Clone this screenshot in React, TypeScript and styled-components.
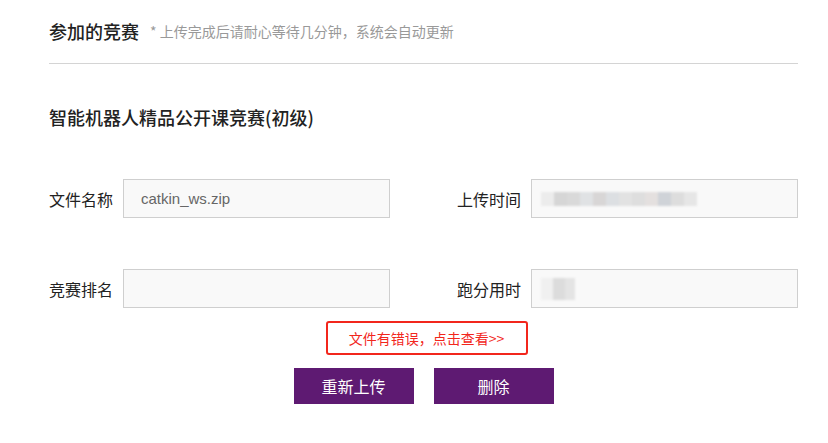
import React from "react";
import styled, { createGlobalStyle } from "styled-components";

const GlobalStyle = createGlobalStyle`
  html, body {
    margin: 0;
    padding: 0;
    background: #fff;
    font-family: "Noto Sans CJK SC", "Noto Sans", sans-serif;
  }
`;

const Page = styled.div`
  width: 749px;
  padding: 18px 0 0 49px;
`;

const Header = styled.div`
  display: flex;
  align-items: center;
  gap: 11px;
  height: 26px;
`;

const Title = styled.h2`
  margin: 0;
  font-size: 18px;
  font-weight: 500;
  color: #222;
`;

const Note = styled.span`
  font-size: 14px;
  color: #999;
`;

const Divider = styled.hr`
  margin: 19px 0 0;
  border: none;
  border-top: 1px solid #d4d4d4;
`;

const SubTitle = styled.h3`
  margin: 40px 0 0;
  height: 26px;
  line-height: 26px;
  font-size: 18px;
  font-weight: 500;
  color: #222;
`;

const Grid = styled.div`
  display: grid;
  grid-template-columns: 341px 341px;
  column-gap: 67px;
  row-gap: 51px;
  margin-top: 49px;
`;

const Field = styled.div`
  display: flex;
  align-items: center;
`;

const Label = styled.label`
  width: 74px;
  flex-shrink: 0;
  font-size: 16px;
  color: #222;
`;

const Input = styled.div<{ $pad?: number }>`
  flex: 1;
  height: 37px;
  display: flex;
  align-items: center;
  padding-left: ${(p) => p.$pad ?? 17}px;
  background: #f9f9f9;
  border: 1px solid #cfcfcf;
  font-family: "Liberation Sans", "Noto Sans", sans-serif;
  font-size: 15px;
  color: #666;
`;

const Blur = styled.div<{ $h?: number }>`
  display: flex;
  height: ${(p) => p.$h ?? 14}px;
  filter: blur(1px);
`;

const Pixel = styled.span<{ $c: string; $w?: number }>`
  width: ${(p) => p.$w ?? 12}px;
  height: 100%;
  background: ${(p) => p.$c};
`;

const Actions = styled.div`
  display: flex;
  flex-direction: column;
  align-items: center;
  width: 749px;
  margin-top: 13px;
`;

const ErrorLink = styled.a`
  box-sizing: border-box;
  width: 202px;
  height: 34px;
  margin-left: 6px;
  display: flex;
  align-items: center;
  justify-content: center;
  border: 2px solid #f2261c;
  border-radius: 3px;
  color: #f2261c;
  font-size: 14px;
  cursor: pointer;
`;

const Buttons = styled.div`
  display: flex;
  gap: 20px;
  margin-top: 13px;
`;

const Button = styled.button`
  width: 120px;
  height: 36px;
  border: none;
  background: #5e1a72;
  color: #fff;
  font-family: "Noto Sans CJK SC", sans-serif;
  font-size: 16px;
  cursor: pointer;
`;

const timeBlur = [
  "#ececec", "#d6d6d6", "#d9d9d9", "#e0e2e4", "#d8d6d6", "#dcdfe2",
  "#e2e2e2", "#dedede", "#e4e0df", "#cfd3d8", "#dddddd", "#e6e6e6",
];

export default function App() {
  return (
    <>
      <GlobalStyle />
      <Page>
        <Header>
          <Title>参加的竞赛</Title>
          <Note>* 上传完成后请耐心等待几分钟，系统会自动更新</Note>
        </Header>
        <Divider />
        <SubTitle>智能机器人精品公开课竞赛(初级)</SubTitle>
        <Grid>
          <Field>
            <Label>文件名称</Label>
            <Input>catkin_ws.zip</Input>
          </Field>
          <Field>
            <Label>上传时间</Label>
            <Input $pad={9}>
              <Blur>
                {timeBlur.map((c, i) => (
                  <Pixel key={i} $c={c} $w={13} />
                ))}
              </Blur>
            </Input>
          </Field>
          <Field>
            <Label>竞赛排名</Label>
            <Input />
          </Field>
          <Field>
            <Label>跑分用时</Label>
            <Input $pad={9}>
              <Blur $h={22}>
                <Pixel $c="#f0f0f0" $w={12} />
                <Pixel $c="#dcdcdc" $w={12} />
                <Pixel $c="#e4e4e4" $w={10} />
              </Blur>
            </Input>
          </Field>
        </Grid>
        <Actions>
          <ErrorLink>文件有错误，点击查看&gt;&gt;</ErrorLink>
          <Buttons>
            <Button>重新上传</Button>
            <Button>删除</Button>
          </Buttons>
        </Actions>
      </Page>
    </>
  );
}
